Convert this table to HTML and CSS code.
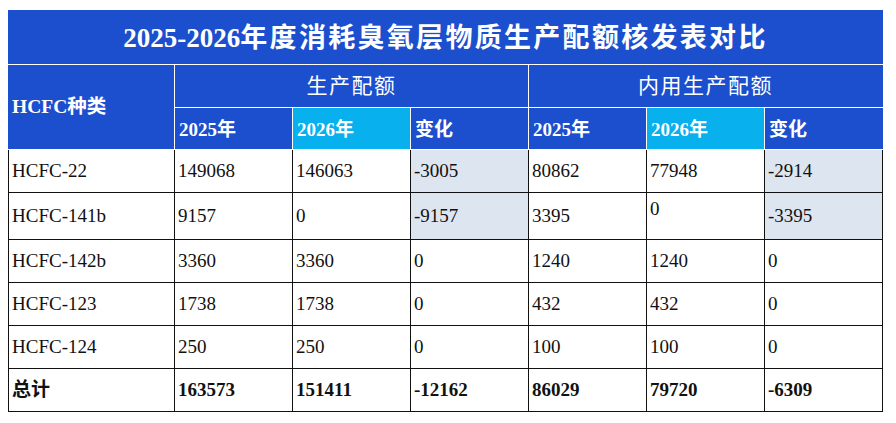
FILE: index.html
```html
<!DOCTYPE html>
<html lang="zh-CN">
<head>
<meta charset="utf-8">
<title>2025-2026年度消耗臭氧层物质生产配额核发表对比</title>
<link rel="stylesheet" href="styles.css">
</head>
<body>
<table class="quota">
  <colgroup>
    <col class="c-name">
    <col class="c-num"><col class="c-num"><col class="c-num">
    <col class="c-num"><col class="c-num"><col class="c-num">
  </colgroup>
  <thead>
    <tr class="title-row">
      <th colspan="7" class="title">2025-2026<span class="cjk-title">年度消耗臭氧层物质生产配额核发表对比</span></th>
    </tr>
    <tr class="group-row">
      <th rowspan="2" class="kind">HCFC种类</th>
      <th colspan="3" class="group">生产配额</th>
      <th colspan="3" class="group">内用生产配额</th>
    </tr>
    <tr class="sub-row">
      <th class="sub">2025年</th>
      <th class="sub hl">2026年</th>
      <th class="sub">变化</th>
      <th class="sub">2025年</th>
      <th class="sub hl">2026年</th>
      <th class="sub">变化</th>
    </tr>
  </thead>
  <tbody>
    <tr>
      <td>HCFC-22</td><td>149068</td><td>146063</td><td class="shade">-3005</td>
      <td>80862</td><td>77948</td><td class="shade">-2914</td>
    </tr>
    <tr>
      <td>HCFC-141b</td><td>9157</td><td>0</td><td class="shade">-9157</td>
      <td>3395</td><td class="top">0</td><td class="shade">-3395</td>
    </tr>
    <tr>
      <td>HCFC-142b</td><td>3360</td><td>3360</td><td>0</td>
      <td>1240</td><td>1240</td><td>0</td>
    </tr>
    <tr>
      <td>HCFC-123</td><td>1738</td><td>1738</td><td>0</td>
      <td>432</td><td>432</td><td>0</td>
    </tr>
    <tr>
      <td>HCFC-124</td><td>250</td><td>250</td><td>0</td>
      <td>100</td><td>100</td><td>0</td>
    </tr>
    <tr class="total">
      <td>总计</td><td>163573</td><td>151411</td><td>-12162</td>
      <td>86029</td><td>79720</td><td>-6309</td>
    </tr>
  </tbody>
</table>
</body>
</html>
```

FILE: styles.css
```css
html, body {
  background: #ffffff;
}
body {
  margin: 10px 0 0 8px;
  font-family: "Liberation Serif", "Noto Sans CJK SC", serif;
  color: #111111;
}
.quota {
  border-collapse: collapse;
  table-layout: fixed;
  width: 875px;
}
.c-name { width: 166px; }
.c-num { width: 118px; }

.quota th {
  background: #1c4fcd;
  color: #ffffff;
  border: 1px solid #ffffff;
  text-align: left;
  padding: 0 4px;
  font-weight: 700;
  white-space: nowrap;
  line-height: 24px;
}
.quota .title {
  height: 53px;
  text-align: center;
  font-size: 27px;
  line-height: 30px;
  border-top: 1px solid #1c4fcd;
  border-left: 1px solid #1c4fcd;
  border-right: 1px solid #1c4fcd;
}
.cjk-title {
  font-weight: 600;
  letter-spacing: 2.3px;
}
.quota .group {
  height: 42px;
  text-align: center;
  font-size: 21px;
  font-weight: 400;
  letter-spacing: 1.5px;
}
.quota .kind {
  font-size: 19.5px;
  border-left: 1px solid #1c4fcd;
  padding-left: 3px;
}
.quota .sub {
  height: 39px;
  font-size: 19px;
  padding-top: 2px;
}
.quota .sub.hl {
  background: #08b0ee;
}
.quota th:last-child,
.quota .group-row .group:last-child {
  border-right: 1px solid #1c4fcd;
}

.quota td {
  height: 42px;
  border: 1px solid #111111;
  font-size: 19px;
  line-height: 24px;
  padding: 0 3px;
  background: #ffffff;
  vertical-align: middle;
  white-space: nowrap;
}
.quota td.shade {
  background: #dde5f0;
}
.quota td.top {
  vertical-align: top;
  padding-top: 4px;
}
.quota .total td {
  font-weight: 700;
}
```
